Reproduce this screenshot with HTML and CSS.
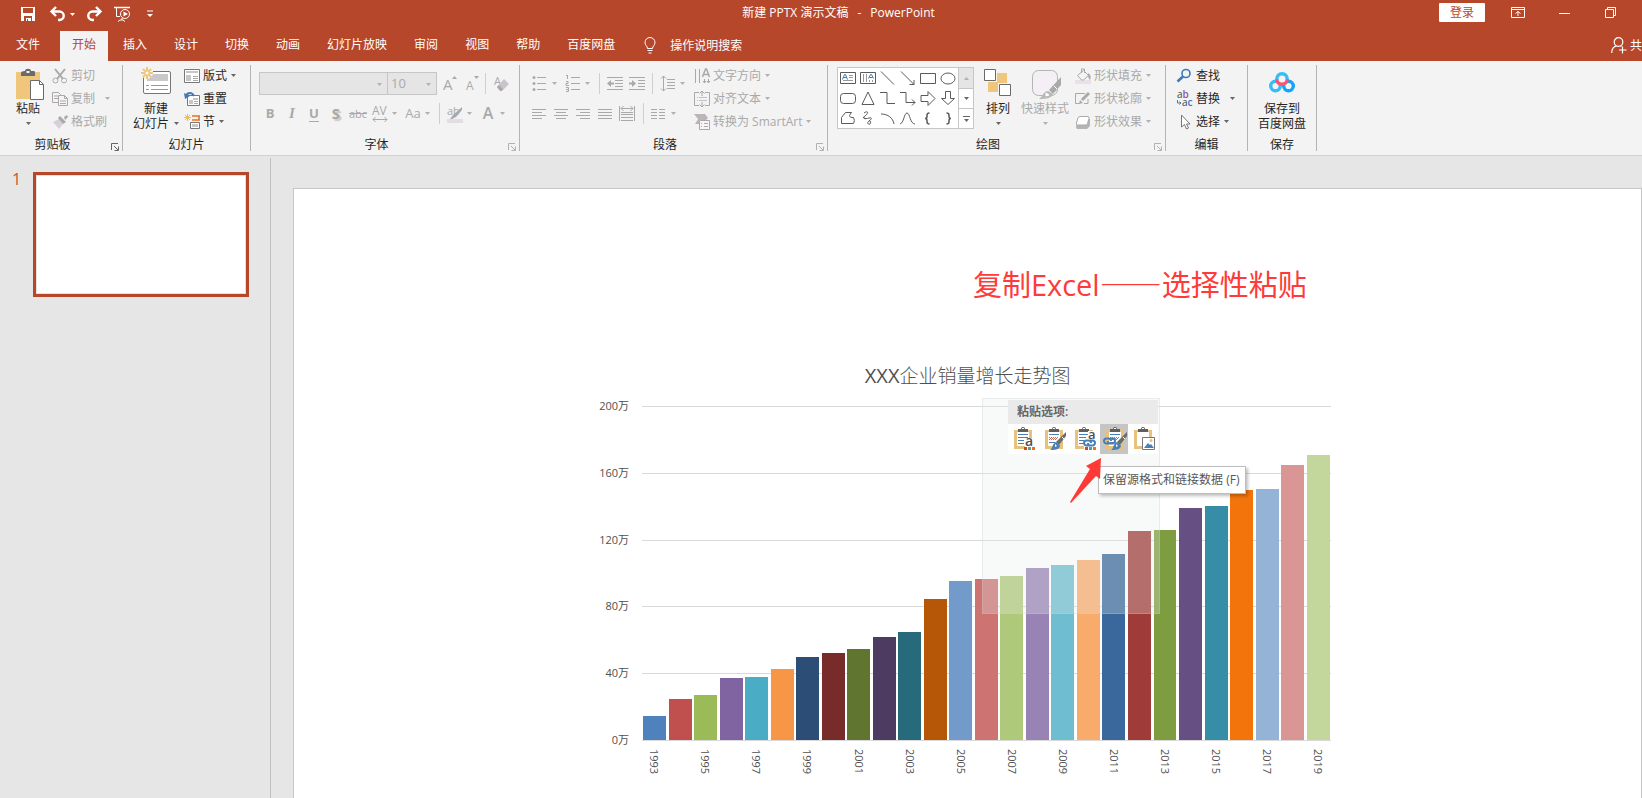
FILE: index.html
```html
<!DOCTYPE html>
<html lang="zh-CN">
<head>
<meta charset="utf-8">
<title>新建 PPTX 演示文稿 - PowerPoint</title>
<link rel="stylesheet" href="styles.css">
</head>
<body>
<svg class="defs" aria-hidden="true">
  <symbol id="caret" viewBox="0 0 5 3"><path d="M0 0h5L2.500 3z" fill="currentColor"/></symbol>
  <symbol id="launch" viewBox="0 0 8 8"><path d="M.5 7V.5H7M3 3l4 4M7.500 3.500v4h-4" fill="none" stroke="currentColor"/></symbol>
  <symbol id="clip" viewBox="0 0 22 22">
    <path d="M0 3h18v19H0z" fill="#e8c17c"/><path d="M3 5h12v14H3z" fill="#fff"/>
    <path d="M4 5V2h3a2 2 0 0 1 4 0h3v3z" fill="#5f5f5f"/><path d="M8 1h2v1H8z" fill="#fff"/>
  </symbol>
  <symbol id="brush" viewBox="0 0 22 22">
    <path d="M21 4v4l-7 9-3-3z" fill="#6b6b6b"/><path d="M17 9l2 2" stroke="#fff" stroke-width="1"/>
    <path d="M11 14l4 3c0 4-3 5-10 5 2-1 2-3 3-5 .6-1.500 2-2.500 3-3z" fill="#4a7fb5"/><path d="M10 16l2 2-2 1z" fill="#fff"/>
  </symbol>
  <symbol id="chain" viewBox="0 0 13 8">
    <path d="M6 6.500H3.500a2.500 2.500 0 0 1 0-5h2c1.500 0 2.500 1 2.500 2.500M7 1.500h2.500a2.500 2.500 0 0 1 0 5h-2C6 6.500 5 5.500 5 4" fill="none" stroke="#4a7fb5" stroke-width="2"/>
  </symbol>
</svg>

<header class="titlebar">
  <div class="quick">
    <button class="save" aria-label="保存"><svg width="16" height="16"><path d="M1 1h14v14H1z" fill="#fff"/><path d="M3 2h10v5H3zM4 10h8v5H4z" fill="#b7472a"/><path d="M6 12h5v3H6z" fill="#fff"/><path d="M7 13h1v2H7z" fill="#b7472a"/></svg></button>
    <button class="undo" aria-label="撤消"><svg width="16" height="16"><path d="M2 5.500h7.500a4.200 4.200 0 0 1 0 8.500H8" fill="none" stroke="#fff" stroke-width="2.400"/><path d="M6 1L1.500 5.500 6 10" fill="none" stroke="#fff" stroke-width="2.400"/></svg><svg class="caret"><use href="#caret"/></svg></button>
    <button aria-label="恢复"><svg width="16" height="16"><path d="M14 5.500H6.500a4.200 4.200 0 0 0 0 8.500H8" fill="none" stroke="#fff" stroke-width="2.400"/><path d="M10 1l4.500 4.500L10 10" fill="none" stroke="#fff" stroke-width="2.400"/></svg></button>
    <button class="show" aria-label="从头开始"><svg width="18" height="16" fill="none" stroke="#fff"><path d="M1 1.500h16" stroke-width="1.500"/><path d="M3.500 2v8.500H7M9 12v2M5 15.500l2-1.500h3l2 1.500"/><circle cx="12" cy="8" r="4.500"/><path d="M10.500 5.500v5L15 8z" fill="#fff" stroke="none"/></svg></button>
    <button class="more" aria-label="自定义快速访问工具栏"><svg width="6" height="8"><path d="M0 1h6" stroke="#fff"/><path d="M0 4h6L3 7z" fill="#fff"/></svg></button>
  </div>
  <h1 class="doc-title"><span>新建 PPTX 演示文稿</span><span>-</span><span>PowerPoint</span></h1>
  <div class="window">
    <button class="login">登录</button>
    <button class="win" aria-label="功能区显示选项"><svg width="14" height="11" fill="none" stroke="#fff"><path d="M.5.5h13v10H.5zM0 2.500h14M7 9V4.500M4.500 6.500L7 4.500l2.500 2"/></svg></button>
    <button class="win" aria-label="最小化"><svg width="11" height="11"><path d="M0 6.500h11" stroke="#fff"/></svg></button>
    <button class="win" aria-label="还原"><svg width="11" height="11" fill="none" stroke="#fff"><path d="M.5 2.500h8v8h-8zM2.500 2V.5h8v8H9"/></svg></button>
  </div>
</header>

<nav class="tabs">
  <button class="tab file">文件</button>
  <button class="tab active">开始</button>
  <button class="tab">插入</button>
  <button class="tab">设计</button>
  <button class="tab">切换</button>
  <button class="tab">动画</button>
  <button class="tab">幻灯片放映</button>
  <button class="tab">审阅</button>
  <button class="tab">视图</button>
  <button class="tab">帮助</button>
  <button class="tab">百度网盘</button>
  <button class="tell"><svg width="12" height="17" fill="none" stroke="#fff"><path d="M3.500 11.500C3.500 9 1 8.500 1 5.500a5 5 0 0 1 10 0c0 3-2.500 3.500-2.500 6zM3.500 13.500h5M4.500 16h3"/></svg>操作说明搜索</button>
  <button class="share"><svg width="16" height="17" fill="none" stroke="#fff" stroke-width="1.200"><circle cx="7.500" cy="5" r="4.300"/><path d="M.7 16c0-4 2-6.500 5-7M9.500 9l1 .6M11.500 9.500v7M8 13h7.500"/></svg>共</button>
</nav>

<section class="ribbon">
  <div class="group g-clip">
    <div class="body">
      <button class="big"><svg width="32" height="36"><path d="M4 7h24v27H4z" fill="#efc67c"/><path d="M9 11V8q0-2 4-2c0-3 6-3 6 0 4 0 4 0 4 2v3z" fill="#6a6a6a"/><path d="M14.500 6h3v2h-3z" fill="#f3f3f3"/><path d="M18.500 15.500h9l4 4v15h-13z" fill="#fff" stroke="#6a6a6a"/><path d="M27.500 15.500v4h4" fill="none" stroke="#6a6a6a"/></svg><span>粘贴</span><svg class="caret"><use href="#caret"/></svg></button>
      <div class="stack">
        <button class="item" disabled><svg width="16" height="16" fill="none" stroke="currentColor"><path d="M3 1l8 10M13 1L5 11" stroke-width="2"/><circle cx="3.500" cy="12.500" r="2.500"/><circle cx="12" cy="12.500" r="2.500"/></svg>剪切</button>
        <button class="item far" disabled><svg width="16" height="16" fill="#f6f2f6" stroke="currentColor"><path d="M.5 1.500h6l2 2v8h-8zM2 5h4M2 7.500h4"/><path d="M6.500 4.500h6l3 3v7h-9zM12.500 4.500v3h3M8 10h6M8 12.500h6"/></svg>复制<svg class="caret"><use href="#caret"/></svg></button>
        <button class="item" disabled><svg width="16" height="16"><path d="M1 8l6-3 4 5-4 5z" fill="#d8d0d8"/><path d="M6 4l2-2 6 6-3 2zM12 3l3-2 1 2-3 3z" fill="currentColor"/></svg>格式刷</button>
      </div>
    </div>
    <div class="foot"><span>剪贴板</span><button class="launch dark" aria-label="剪贴板选项"><svg width="8" height="8"><use href="#launch"/></svg></button></div>
  </div>

  <div class="group g-slides">
    <div class="body">
      <button class="big"><svg width="32" height="36"><rect x="3.500" y="6.500" width="27" height="22" rx="1.500" fill="#fff" stroke="#777"/><path d="M7 9h21v7H7z" fill="#c9c9c9"/><path d="M6 20.500h3M11 20.500h17M6 24.500h3M11 24.500h17" stroke="#9a9a9a"/><path d="M7 2v12M1 8h12M3 4l8 8M11 4l-8 8" stroke="#f3f3f3" stroke-width="4"/><path d="M7 2v12M1 8h12M3 4l8 8M11 4l-8 8" stroke="#efc67c" stroke-width="2"/><circle cx="7" cy="8" r="1.500" fill="#fff"/></svg><span>新建</span><span class="line">幻灯片<svg class="caret"><use href="#caret"/></svg></span></button>
      <div class="stack">
        <button class="item"><svg width="16" height="16"><path d="M.5 1.500h15v13H.5z" fill="#fff" stroke="#777"/><path d="M2 3h12v2H2zM2 7h5v6H2z" fill="#c6c6c6"/><path d="M9 8.500h5M9 10.500h5M9 12.500h5" stroke="#a9a9a9"/></svg>版式<svg class="caret"><use href="#caret"/></svg></button>
        <button class="item"><svg width="16" height="16"><path d="M3.500 4.500h12v10h-12z" fill="#fff" stroke="#777"/><path d="M9 7h5v2H9zM5 9h4v4H5z" fill="#c6c6c6"/><path d="M10 10.500h4M10 12.500h4" stroke="#a9a9a9"/><path d="M1.500 5C4 1 8 1 10 5" fill="none" stroke="#3f79b8" stroke-width="2"/><path d="M0 2l1 6 5-3z" fill="#3f79b8"/></svg>重置</button>
        <button class="item"><svg width="16" height="16"><path d="M8 2h8M8 6h8M15 2v4" stroke="#e8731c" stroke-width="1.500"/><path d="M6.500 8.500h9v6h-9z" fill="#fff" stroke="#777"/><path d="M8 10h6v3H8z" fill="#c6c6c6"/><path d="M3.500 0v7M0 3.500h7M1 1l5 5M6 1L1 6" stroke="#efb95c"/></svg>节<svg class="caret"><use href="#caret"/></svg></button>
      </div>
    </div>
    <div class="foot"><span>幻灯片</span></div>
  </div>

  <div class="group g-font">
    <div class="body tools">
      <div class="row">
        <label class="combo name"><select aria-label="字体" disabled><option></option></select><svg class="caret"><use href="#caret"/></svg></label>
        <label class="combo size"><select aria-label="字号" disabled><option>10</option></select><svg class="caret"><use href="#caret"/></svg></label>
        <button class="tool" aria-label="增大字号" disabled><svg width="20" height="20"><text x="5" y="16" font-size="15">A</text><path d="M14 5l2.500-3L19 5z"/></svg></button>
        <button class="tool" aria-label="减小字号" disabled><svg width="20" height="20"><text x="6" y="16" font-size="12">A</text><path d="M14 2h5l-2.500 3z"/></svg></button>
        <i class="sep"></i>
        <button class="tool" aria-label="清除格式" disabled><svg width="20" height="20"><text x="3" y="11" font-size="11">A</text><path d="M6 13l7-8 5 5-6 6H9z" fill="#c8c4c8"/><path d="M6 13l2-2 4 4-1 2H9z"/></svg></button>
      </div>
      <div class="row">
        <button class="tool bold" disabled>B</button>
        <button class="tool ital" disabled>I</button>
        <button class="tool under" disabled>U</button>
        <button class="tool shadow" disabled>S</button>
        <button class="tool strike" disabled>abc</button>
        <button class="split" aria-label="字符间距" disabled><svg width="22" height="20"><text x="3" y="11" font-size="12">AV</text><path d="M4 15.500h14M6.500 13L4 15.500 6.500 18M15.500 13l2.500 2.500-2.500 2.500" fill="none" stroke="currentColor"/></svg><svg class="caret"><use href="#caret"/></svg></button>
        <button class="split" disabled><span>Aa</span><svg class="caret"><use href="#caret"/></svg></button>
        <i class="sep"></i>
        <button class="split" aria-label="突出显示" disabled><svg width="22" height="20"><path d="M3 15h16v4H3z" fill="#e3dce3"/><text x="3" y="11" font-size="11">ab</text><path d="M18 3v3l-6 7-3-2zM9 11l3 2-4 2H6z"/></svg><svg class="caret"><use href="#caret"/></svg></button>
        <button class="split color" disabled><span>A</span><svg class="caret"><use href="#caret"/></svg></button>
      </div>
    </div>
    <div class="foot"><span>字体</span><button class="launch" aria-label="字体选项"><svg width="8" height="8"><use href="#launch"/></svg></button></div>
  </div>

  <div class="group g-para">
    <div class="body">
      <div class="tools">
        <div class="row">
          <button class="split" aria-label="项目符号" disabled><svg width="22" height="20" stroke="currentColor"><path d="M8 3.500h9M8 9.500h9M8 15.500h9"/><g stroke="none"><circle cx="5" cy="3.500" r="1.500"/><circle cx="5" cy="9.500" r="1.500"/><circle cx="5" cy="15.500" r="1.500"/></g></svg><svg class="caret"><use href="#caret"/></svg></button>
          <button class="split" aria-label="编号" disabled><svg width="22" height="20"><path d="M9 3.500h9M9 9.500h9M9 15.500h9M5.500 1v4M4 1.500h1.500M4 7.500h2v2H4v2h3M4 13.500h2.500v4H4M4 15.500h2" fill="none" stroke="currentColor"/></svg><svg class="caret"><use href="#caret"/></svg></button>
          <i class="sep"></i>
          <button class="tool" aria-label="减少缩进" disabled><svg width="20" height="20"><path d="M2 3.500h16M10 6.500h8M10 9.500h8M10 12.500h8M2 15.500h16" stroke="currentColor"/><path d="M2 9.500L6 6v2.500h3v2H6V13z"/></svg></button>
          <button class="tool" aria-label="增加缩进" disabled><svg width="20" height="20"><path d="M2 3.500h16M11 6.500h7M11 9.500h7M11 12.500h7M2 15.500h16" stroke="currentColor"/><path d="M9 9.500L5 6v2.500H2v2h3V13z"/></svg></button>
          <i class="sep"></i>
          <button class="split" aria-label="行距" disabled><svg width="22" height="20"><path d="M10 5.500h8M10 8.500h8M10 11.500h8M10 14.500h8M6.500 2v15M4 4.500L6.500 2 9 4.500M4 14.500L6.500 17 9 14.500" fill="none" stroke="currentColor"/></svg><svg class="caret"><use href="#caret"/></svg></button>
        </div>
        <div class="row">
          <button class="tool" aria-label="左对齐" disabled><svg width="20" height="20"><path d="M2 5.500h14M2 8.500h10M2 11.500h14M2 14.500h10" stroke="currentColor"/></svg></button>
          <button class="tool" aria-label="居中" disabled><svg width="20" height="20"><path d="M2 5.500h14M4 8.500h10M2 11.500h14M4 14.500h10" stroke="currentColor"/></svg></button>
          <button class="tool" aria-label="右对齐" disabled><svg width="20" height="20"><path d="M2 5.500h14M6 8.500h10M2 11.500h14M6 14.500h10" stroke="currentColor"/></svg></button>
          <button class="tool" aria-label="两端对齐" disabled><svg width="20" height="20"><path d="M2 5.500h14M2 8.500h14M2 11.500h14M2 14.500h14" stroke="currentColor"/></svg></button>
          <button class="tool" aria-label="分散对齐" disabled><svg width="20" height="20" fill="none" stroke="currentColor"><path d="M1.500 2v15M16.500 2v15M3 4.500h12M5.500 2L3 4.500 5.500 7M12.500 2L15 4.500 12.500 7M3 8.500h12M3 10.500h12M3 13.500h12M3 16.500h12"/></svg></button>
          <i class="sep"></i>
          <button class="split" aria-label="分栏" disabled><svg width="22" height="20"><path d="M3 5.500h6M11 5.500h6M3 8.500h6M11 8.500h6M3 11.500h6M11 11.500h6M3 14.500h6M11 14.500h6" stroke="currentColor"/></svg><svg class="caret"><use href="#caret"/></svg></button>
        </div>
      </div>
      <div class="stack">
        <button class="item" disabled><svg width="16" height="16" fill="none" stroke="currentColor"><path d="M1.500 1v14M5.500 1v14M10.500 11v4M14.500 11v4M9 13l1.500 2 1.500-2M13 13l1.500 2 1.500-2"/><path d="M8.500 9L11.500 1h1l3 8M9.500 6.500h5" stroke-width="1.500"/></svg>文字方向<svg class="caret"><use href="#caret"/></svg></button>
        <button class="item" disabled><svg width="16" height="16" fill="none" stroke="currentColor"><path d="M5 1.500H.5v13H5M11 1.500h4.500v13H11M8 0v5M5.500 2.500L8 0l2.500 2.500M8 16v-5M5.500 13.500L8 16l2.500-2.500"/><path d="M3 6.500h1M5 6.500h8M3 9.500h1M5 9.500h8" stroke="#c9bccb"/></svg>对齐文本<svg class="caret"><use href="#caret"/></svg></button>
        <button class="item" disabled><svg width="16" height="16"><path d="M0 0h11l3 4-2 2H5v4H1l3-5z" fill="#b9b5b9"/><path d="M5.500 6.500h10v9h-10z" fill="#f8f4f8" stroke="currentColor"/><path d="M7 9.500h1M10 9.500h4M7 12.500h1M10 12.500h4" stroke="currentColor"/></svg>转换为 SmartArt<svg class="caret"><use href="#caret"/></svg></button>
      </div>
    </div>
    <div class="foot"><span>段落</span><button class="launch" aria-label="段落选项"><svg width="8" height="8"><use href="#launch"/></svg></button></div>
  </div>

  <div class="group g-draw">
    <div class="body">
      <div class="gallery">
        <div class="shapes">
          <button aria-label="文本框"><svg width="18" height="18"><path d="M1.500 3.500h15v11h-15z"/><path d="M10 6.500h4M10 8.500h4M4 11.500h10" stroke="#999"/><path d="M3.500 10.500l2-5h1l2 5M4.500 8.500h3" stroke="#3f79b8"/></svg></button>
          <button aria-label="竖排文本框"><svg width="18" height="18"><path d="M1.500 3.500h15v11h-15z"/><path d="M4.500 5v8M7.500 5v8M10.500 11v2M13.500 11v2" stroke="#999"/><path d="M9.500 9.500l2-4h1l2 4M10.500 8.500h3" stroke="#3f79b8"/></svg></button>
          <button aria-label="直线"><svg width="18" height="18"><path d="M2 2.500l13 13"/></svg></button>
          <button aria-label="箭头"><svg width="18" height="18"><path d="M2 2.500l13 13M15 11v4.500h-4.500"/></svg></button>
          <button aria-label="矩形"><svg width="18" height="18"><path d="M1.500 4.500h15v10h-15z"/></svg></button>
          <button aria-label="椭圆"><svg width="18" height="18"><ellipse cx="9" cy="9.500" rx="7" ry="5.500"/></svg></button>
          <button aria-label="圆角矩形"><svg width="18" height="18"><rect x="1.500" y="4.500" width="15" height="10" rx="3"/></svg></button>
          <button aria-label="三角形"><svg width="18" height="18"><path d="M9 3L3 15.500h12z"/></svg></button>
          <button aria-label="肘形连接符"><svg width="18" height="18"><path d="M1 3.500h7v11h8"/></svg></button>
          <button aria-label="肘形箭头"><svg width="18" height="18"><path d="M1 3.500h6v10h9M13 10.500l3 3-3 3"/></svg></button>
          <button aria-label="右箭头"><svg width="18" height="18"><path d="M2 6.500h7V2.500l7 7-7 7v-4H2z"/></svg></button>
          <button aria-label="下箭头"><svg width="18" height="18"><path d="M6.500 2.500v7H2.500l6.500 6 6.500-6h-4v-7z"/></svg></button>
          <button aria-label="任意多边形"><svg width="18" height="18"><path d="M2.500 14.500v-6l4-5h6l-2 3c0 2 2 2 4 2 1 2 1 4 0 6z"/></svg></button>
          <button aria-label="自由曲线"><svg width="18" height="18"><path d="M5 4c4-3 5 0 1 3s1 3 4 2 3 1 0 3 0 4 1 3 1-4-1-3M4 8l3 2"/></svg></button>
          <button aria-label="弧形"><svg width="18" height="18"><path d="M2 5c7 0 12 4 13 10"/></svg></button>
          <button aria-label="曲线"><svg width="18" height="18"><path d="M1 15c4-1 4-11 7-11s3 11 8 11"/></svg></button>
          <button aria-label="左大括号"><svg width="18" height="18"><path d="M10.500 4c-2 0-2.500.5-2.500 2v1.500c0 1.300-.5 2-2 2 1.500 0 2 .7 2 2V13c0 1.500.5 2 2.500 2" stroke-width="1.500"/></svg></button>
          <button aria-label="右大括号"><svg width="18" height="18"><path d="M7.500 4c2 0 2.500.5 2.500 2v1.500c0 1.300.5 2 2 2-1.500 0-2 .7-2 2V13c0 1.500-.5 2-2.500 2" stroke-width="1.500"/></svg></button>
        </div>
        <div class="scroll">
          <button class="off" aria-label="上一行"><svg class="caret up"><use href="#caret"/></svg></button>
          <button aria-label="下一行"><svg class="caret"><use href="#caret"/></svg></button>
          <button aria-label="其他"><i class="bar-line"></i><svg class="caret"><use href="#caret"/></svg></button>
        </div>
      </div>
      <button class="big arrange"><svg width="28" height="36"><path d="M13 8h10v10H13zM4 17h10v10H4z" fill="#efc67c"/><path d="M.5 4.500h11v11H.5zM15.500 19.500h11v11h-11z" fill="#fff" stroke="#6a6a6a"/></svg><span>排列</span><svg class="caret"><use href="#caret"/></svg></button>
      <button class="big styles" disabled><svg width="32" height="36"><rect x="3.500" y="5.500" width="25" height="25" rx="6" fill="#f3eff4" stroke="#b4b4b4"/><path d="M32 12v8l-8 9-4-4z" fill="#a9a9a9"/><path d="M19 26l5 3c-1 4-6 5-14 5 4-2 3-7 9-8z" fill="#b9b9b9"/><path d="M17 28l3 2-3 1zM25 21l3 3" fill="#fff" stroke="#fff"/></svg><span>快速样式</span><svg class="caret"><use href="#caret"/></svg></button>
      <div class="stack">
        <button class="item" disabled><svg width="16" height="16"><path d="M0 12h16v4H0z" fill="#e8e2e8"/><path d="M2.500 7.500l6-5 5 5-5 4.500h-2zM6.500 5V1h3v4" fill="#f6f2f6" stroke="currentColor"/><path d="M13 5c3 2 3 4 2 7-2-2-2-4-2-7z" fill="currentColor"/></svg>形状填充<svg class="caret"><use href="#caret"/></svg></button>
        <button class="item" disabled><svg width="16" height="16" fill="none" stroke="currentColor"><path d="M10 2.500H.5v10h4M13 8v4.500H9"/><path d="M14 2L7 9" stroke-width="3"/><path d="M4 13l1-4 3 3z" fill="currentColor" stroke="none"/></svg>形状轮廓<svg class="caret"><use href="#caret"/></svg></button>
        <button class="item" disabled><svg width="16" height="16"><path d="M4 5h11v7l-3 3H2q-2-2 0-5z" fill="#b4b4b4"/><path d="M5 2.500h8q1.500 0 1 2l-1.500 5q-.5 1.500-2 1.500h-8q-1.500 0-1-2l1.500-5q.5-1.500 2-1.500z" fill="#fff" stroke="currentColor"/></svg>形状效果<svg class="caret"><use href="#caret"/></svg></button>
      </div>
    </div>
    <div class="foot"><span>绘图</span><button class="launch" aria-label="绘图选项"><svg width="8" height="8"><use href="#launch"/></svg></button></div>
  </div>

  <div class="group g-edit">
    <div class="body">
      <div class="stack">
        <button class="item"><svg width="16" height="16" fill="none" stroke="#3f79b8"><circle cx="9" cy="5.500" r="4" stroke-width="1.600"/><path d="M6 8.500L.5 13.500" stroke-width="2.600"/></svg>查找</button>
        <button class="item far"><svg class="abac" width="16" height="16"><text x="0" y="7" font-size="10"><tspan fill="#444">a</tspan><tspan fill="#8a55a8" font-weight="600">b</tspan></text><text x="5" y="15" font-size="10"><tspan fill="#444">a</tspan><tspan fill="#3f79b8" font-weight="600">c</tspan></text><path d="M.5 9v3H4M2.500 10.500L4 12l-1.500 1.500" fill="none" stroke="#3f79b8"/></svg>替换<svg class="caret"><use href="#caret"/></svg></button>
        <button class="item"><svg width="16" height="16"><path d="M4.500 1v12l3-2.500 2 4.500 2-1-2-4H13z" fill="#fff" stroke="#777"/></svg>选择<svg class="caret"><use href="#caret"/></svg></button>
      </div>
    </div>
    <div class="foot"><span>编辑</span></div>
  </div>

  <div class="group g-save">
    <div class="body">
      <button class="big"><svg width="28" height="36" fill="none" stroke-width="3.400"><circle cx="7.500" cy="21" r="4.800" stroke="#35bdf6"/><circle cx="20.500" cy="21" r="4.800" stroke="#12a4fb"/><circle cx="14" cy="14" r="5.200" fill="#f3f3f3" stroke="none"/><path d="M8.800 14a5.200 5.200 0 0 1 10.400 0" stroke="#35bdf6"/><path d="M8.800 14a5.200 5.200 0 0 0 10.400 0" stroke="#fb5573"/></svg><span>保存到</span><span class="line">百度网盘</span></button>
    </div>
    <div class="foot"><span>保存</span></div>
  </div>
</section>

<main class="workspace">
  <aside class="panel">
    <span class="num">1</span>
    <div class="thumb"></div>
  </aside>
  <section class="canvas">
    <article class="slide">
      <h2 class="headline">复制Excel<span class="dash">——</span>选择性粘贴</h2>
      <figure class="chart">
        <figcaption><span class="latin">XXX</span>企业销量增长走势图</figcaption>
        <div class="yaxis"><span>200万</span><span>160万</span><span>120万</span><span>80万</span><span>40万</span><span>0万</span></div>
        <div class="plot">
          <div class="lines"><i></i><i></i><i></i><i></i><i></i></div>
          <div class="bars">
            <i style="height:7.2%;background:#4f81bd"></i>
            <i style="height:12.3%;background:#c0504d"></i>
            <i style="height:13.5%;background:#9bbb59"></i>
            <i style="height:18.6%;background:#8064a2"></i>
            <i style="height:18.9%;background:#4bacc6"></i>
            <i style="height:21.3%;background:#f79646"></i>
            <i style="height:24.9%;background:#2c4d75"></i>
            <i style="height:26.1%;background:#772c2a"></i>
            <i style="height:27.2%;background:#5f7530"></i>
            <i style="height:30.8%;background:#4d3b62"></i>
            <i style="height:32.3%;background:#276a7c"></i>
            <i style="height:42.2%;background:#b65708"></i>
            <i style="height:47.6%;background:#729aca"></i>
            <i style="height:48.2%;background:#cd7371"></i>
            <i style="height:49.1%;background:#afc97a"></i>
            <i style="height:51.5%;background:#9983b5"></i>
            <i style="height:52.4%;background:#6fbdd1"></i>
            <i style="height:53.9%;background:#f9ab6b"></i>
            <i style="height:55.7%;background:#3a679c"></i>
            <i style="height:62.6%;background:#9f3b38"></i>
            <i style="height:62.9%;background:#7e9d40"></i>
            <i style="height:69.5%;background:#664f83"></i>
            <i style="height:70.1%;background:#358ea6"></i>
            <i style="height:74.9%;background:#f3740b"></i>
            <i style="height:75.1%;background:#95b3d7"></i>
            <i style="height:82.3%;background:#d99694"></i>
            <i style="height:85.3%;background:#c3d69b"></i>
          </div>
          <div class="ghost"></div>
          <div class="paste">
            <div class="paste-title">粘贴选项:</div>
            <div class="paste-row">
              <button aria-label="使用目标主题"><svg width="22" height="24"><use href="#clip" width="22" height="22"/><path d="M4 7.500h10M4 10.500h10M4 13.500h6M4 16.500h6" stroke="#4a7fb5"/><path d="M11 11h8v13h-8z" fill="#fff"/><text x="11" y="19" font-size="14" font-weight="600">a</text><path d="M10 20h3v3h-3z" fill="#d24726"/><path d="M14 20h3v3h-3z" fill="#5b9e8f"/><path d="M18 20h3v3h-3z" fill="#e8731c"/></svg></button>
              <button aria-label="保留源格式"><svg width="22" height="24"><use href="#clip" width="22" height="22"/><path d="M4 7.500h10M4 15.500h6" stroke="#4a7fb5"/><path d="M4 10.500h9M5 11.500h8M4 12.500h8" stroke="#e0664a" stroke-dasharray="1 1"/><use href="#brush" y="1" width="22" height="22"/></svg></button>
              <button aria-label="使用目标主题和链接数据"><svg width="22" height="24"><use href="#clip" width="22" height="22"/><path d="M4 7.500h9M4 10.500h7M4 13.500h5M4 16.500h5" stroke="#4a7fb5"/><path d="M13 4h6v9h-6zM9 13h12v11H9z" fill="#fff"/><text x="13" y="12" font-size="13" font-weight="600">a</text><use href="#chain" x="8" y="12" width="13" height="8"/><path d="M10 20h3v3h-3z" fill="#d24726"/><path d="M14 20h3v3h-3z" fill="#5b9e8f"/><path d="M18 20h3v3h-3z" fill="#e8731c"/></svg></button>
              <button class="on" aria-label="保留源格式和链接数据"><svg width="26" height="24"><use href="#clip" x="4" width="22" height="22"/><path d="M8 7.500h10M8 15.500h6" stroke="#4a7fb5"/><path d="M8 10.500h9M9 11.500h8M8 12.500h8" stroke="#e0664a" stroke-dasharray="1 1"/><use href="#brush" x="4" y="1" width="22" height="22"/><use href="#chain" x="1" y="10" width="13" height="8"/></svg></button>
              <button aria-label="图片"><svg width="22" height="24"><use href="#clip" width="22" height="22"/><path d="M8.500 10.500h12v12h-12z" fill="#fff" stroke="#777"/><path d="M10 21l4-5 2 2 1-1 3 4z" fill="#4a7fb5"/><circle cx="17" cy="13.500" r="1.500" fill="#e8c17c"/></svg></button>
            </div>
          </div>
          <div class="tip">保留源格式和链接数据 (F)</div>
          <svg class="arrow" width="32" height="46"><path d="M31 1L16 9l4 3L0 45l1 1L26 19l4 3z" fill="#ff3a36"/></svg>
        </div>
        <div class="xaxis"><span>1993</span><span>1995</span><span>1997</span><span>1999</span><span>2001</span><span>2003</span><span>2005</span><span>2007</span><span>2009</span><span>2011</span><span>2013</span><span>2015</span><span>2017</span><span>2019</span></div>
      </figure>
    </article>
  </section>
</main>
</body>
</html>
```
FILE: styles.css
```css
* { box-sizing: border-box; }
body {
  margin: 0;
  height: 100vh;
  display: flex;
  flex-direction: column;
  overflow: hidden;
  background: #e6e6e6;
  color: #262626;
  font: 12px/15px "Open Sans", "Noto Sans CJK SC", sans-serif;
}
button, select {
  font: inherit;
  color: inherit;
  border: 0;
  padding: 0;
  background: none;
}
button:disabled { color: #a9a9a9; }
svg { display: block; flex: none; overflow: visible; }
svg text { fill: currentColor; }
.defs { position: absolute; width: 0; height: 0; }
.caret { width: 5px; height: 3px; color: #666; }
button:disabled .caret { color: #b1b1b1; }

/* title bar */
.titlebar {
  height: 31px;
  display: grid;
  grid-template-columns: 1fr auto 1fr;
  background: #b7472a;
  color: #fff;
  padding: 0 9px 0 20px;
}
.quick { display: flex; align-items: center; height: 28px; gap: 11px; }
.quick button { display: flex; align-items: center; gap: 4px; }
.quick .caret { color: #fff; }
.quick .save { margin-right: 3px; }
.quick .more { padding-left: 5px; }
.doc-title {
  margin: 0;
  padding-left: 24px;
  display: flex;
  gap: 9px;
  align-items: center;
  height: 24px;
  font-size: 12px;
  font-weight: 400;
}
.window { display: flex; justify-content: flex-end; align-items: center; height: 25px; }
.login {
  width: 46px;
  height: 19px;
  margin-right: 10px;
  background: #fff;
  color: #b7472a;
  border-radius: 1px;
}
.win { width: 46px; display: flex; justify-content: center; }

/* ribbon tabs */
.tabs {
  height: 30px;
  display: flex;
  gap: 3px;
  padding-left: 4px;
  background: #b7472a;
  color: #fff;
}
.tab { padding: 0 12px 3px; white-space: nowrap; }
.tab.file { margin-right: 5px; }
.tab.active { background: #f3f3f3; color: #b7472a; }
.tell { display: flex; align-items: center; gap: 14px; padding: 0 0 2px 14px; }
.share { display: flex; align-items: center; gap: 3px; margin-left: auto; padding-bottom: 1px; }

/* ribbon */
.ribbon {
  display: flex;
  padding: 4px 0;
  background: #f3f3f3;
  border-bottom: 1px solid #d2d2d2;
}
.group { flex: none; border-right: 1px solid #b4b4b4; }
.g-clip { width: 123px; }
.g-slides { width: 128px; }
.g-font { width: 269px; }
.g-para { width: 308px; }
.g-draw { width: 338px; }
.g-edit { width: 82px; }
.g-save { width: 69px; }
.body { height: 72px; display: flex; align-items: flex-start; }
.g-clip .body { padding-left: 12px; gap: 8px; }
.g-slides .body { padding-left: 10px; gap: 5px; }
.g-font .body { padding-left: 8px; }
.g-para .body { padding-left: 9px; gap: 4px; }
.g-draw .body { padding-left: 9px; }
.g-edit .body { padding-left: 11px; }
.g-save .body { justify-content: center; }
.foot { height: 14px; display: flex; }
.foot span { flex: 1; text-align: center; line-height: 15px; }
.launch { width: 17px; color: #b1b1b1; display: flex; align-items: flex-end; padding-left: 6px; }
.launch.dark { color: #666; }

.big { display: flex; flex-direction: column; align-items: center; white-space: nowrap; }
.big > .caret { margin-top: 6px; }
.big .line { display: flex; align-items: center; gap: 5px; }
.g-slides .big { width: 46px; }
.arrange { margin: 0 9px 0 10px; }
.styles { margin-right: 6px; }
.stack { display: flex; flex-direction: column; gap: 2px; }
.item { height: 21px; display: flex; align-items: center; gap: 3px; white-space: nowrap; }
.item .caret { margin-left: 1px; }
.item.far .caret { margin-left: 7px; }

.body.tools { flex-direction: column; }
.tools { padding-top: 7px; }
.row { height: 23px; display: flex; align-items: center; }
.row + .row { margin-top: 7px; }
.tool { width: 22px; height: 22px; display: flex; align-items: center; justify-content: center; fill: currentColor; font-size: 13px; }
.split { height: 22px; margin-right: 3px; display: flex; align-items: center; gap: 1px; fill: currentColor; font-size: 13px; padding-right: 2px; }
.split span { width: 22px; text-align: center; }
.sep { width: 1px; height: 21px; margin: 0 4px; background: #cfcfcf; }
.bold, .under, .shadow { font-weight: 700; }
.ital { font-family: "Liberation Serif", serif; font-style: italic; font-weight: 700; font-size: 15px; }
.under { text-decoration: underline; text-underline-offset: 3px; }
.shadow { font-size: 15px; text-shadow: 2px 2px 1px #c9c9c9; }
.strike { font-size: 11px; text-decoration: line-through; }
.color { font-size: 16px; font-weight: 600; }
.combo { position: relative; height: 23px; border: 1px solid #c6c6c6; background: #e5e5e5; color: #a9a9a9; }
.combo.name { width: 129px; }
.combo.size { width: 50px; margin-left: -1px; }
.combo select { appearance: none; display: block; width: 100%; height: 21px; padding: 0 3px; opacity: 1; font-size: 13px; }
.combo .caret { position: absolute; right: 5px; top: 10px; color: #b1b1b1; pointer-events: none; }

.gallery { display: flex; margin-top: 2px; height: 62px; border: 1px solid #c6c6c6; background: #fff; }
.shapes { display: grid; grid-template-columns: repeat(6, 20px); }
.shapes button { display: flex; align-items: center; justify-content: center; }
.shapes svg { fill: none; stroke: #5a5a5a; }
.scroll { width: 15px; display: grid; grid-template-rows: repeat(3, 1fr); border-left: 1px solid #c6c6c6; }
.scroll button { display: flex; flex-direction: column; align-items: center; justify-content: center; gap: 2px; }
.scroll button + button { border-top: 1px solid #c6c6c6; }
.scroll .off { background: #e5e5e5; }
.off .caret { color: #b1b1b1; }
.up { transform: rotate(180deg); }
.bar-line { width: 7px; height: 1px; background: #666; }

/* workspace */
.workspace { flex: 1; min-height: 0; display: flex; }
.panel {
  width: 271px;
  margin-top: 2px;
  padding: 14px 21px 0 12px;
  border-right: 1px solid #c0c0c0;
  display: flex;
  align-items: flex-start;
}
.num { width: 21px; font-size: 16px; line-height: 15px; color: #cc5334; }
.thumb { flex: 1; aspect-ratio: 216 / 125; background: #fff; border: 3px solid #b7472a; box-shadow: inset 0 0 0 1px #e0e0e0; }
.canvas { flex: 1; display: flex; padding: 32px 0 0 22px; }
.slide { flex: 1; padding-top: 74px; background: #fff; border: 1px solid #c6c6c6; border-bottom: 0; }
.headline { margin: 0 0 0 50.4%; height: 40px; font-size: 29px; line-height: 40px; font-weight: 400; color: #ff3a3a; white-space: nowrap; }
.dash { font-family: "Noto Sans CJK SC", sans-serif; font-size: 31px; }

/* chart */
.chart {
  margin: 59px 23% 0 22.5%;
  display: grid;
  grid-template-columns: 32px 1fr;
  column-gap: 13px;
  color: #505050;
  font-size: 11px;
}
.chart figcaption { grid-column: 1 / -1; margin-bottom: 16px; padding-left: 7px; text-align: center; font-size: 19px; line-height: 28px; font-weight: 300; }
.latin { font-weight: 400; font-size: 20px; }
.yaxis { margin: -8px 0 -6px; display: flex; flex-direction: column; justify-content: space-between; text-align: right; white-space: nowrap; }
.plot { position: relative; height: 335px; display: grid; }
.lines, .bars { grid-area: 1 / 1; }
.lines { display: flex; flex-direction: column; border-bottom: 1px solid #d9d9d9; }
.lines i { flex: 1; border-top: 1px solid #d9d9d9; }
.bars { display: grid; grid-template-columns: repeat(27, 1fr); align-items: end; padding-bottom: 1px; }
.bars i { width: 90%; margin-left: 1px; }
.xaxis { grid-column: 2; display: grid; grid-template-columns: repeat(27, 1fr); padding-top: 8px; }
.xaxis span { grid-row: 1; writing-mode: vertical-rl; justify-self: center; line-height: 15px; }
.xaxis span:nth-child(1) { grid-column: 1; }
.xaxis span:nth-child(2) { grid-column: 3; }
.xaxis span:nth-child(3) { grid-column: 5; }
.xaxis span:nth-child(4) { grid-column: 7; }
.xaxis span:nth-child(5) { grid-column: 9; }
.xaxis span:nth-child(6) { grid-column: 11; }
.xaxis span:nth-child(7) { grid-column: 13; }
.xaxis span:nth-child(8) { grid-column: 15; }
.xaxis span:nth-child(9) { grid-column: 17; }
.xaxis span:nth-child(10) { grid-column: 19; }
.xaxis span:nth-child(11) { grid-column: 21; }
.xaxis span:nth-child(12) { grid-column: 23; }
.xaxis span:nth-child(13) { grid-column: 25; }
.xaxis span:nth-child(14) { grid-column: 27; }

/* floating paste preview */
.ghost { position: absolute; left: 340px; top: -8px; width: 178px; height: 216px; background: rgba(231, 238, 234, .29); border: 1px solid rgba(200, 205, 205, .3); }
.paste { position: absolute; left: 366px; top: -6px; width: 150px; font-size: 12px; }
.paste-title { height: 24px; padding-left: 9px; line-height: 24px; background: #eaeaea; font-weight: 600; color: #666; }
.paste-row { display: flex; height: 30px; background: #fff; }
.paste-row button { flex: 1; display: flex; align-items: center; padding-left: 6px; }
.paste-row .on { background: #c5c5c5; padding-left: 2px; }
.tip { position: absolute; left: 456px; top: 60px; padding: 5px 6px 6px 4px; font-size: 12px; white-space: nowrap; background: #fff; border: 1px solid #bebebe; box-shadow: 2px 2px 3px rgba(0, 0, 0, .25); color: #575757; }
.arrow { position: absolute; left: 428px; top: 51px; }
```
